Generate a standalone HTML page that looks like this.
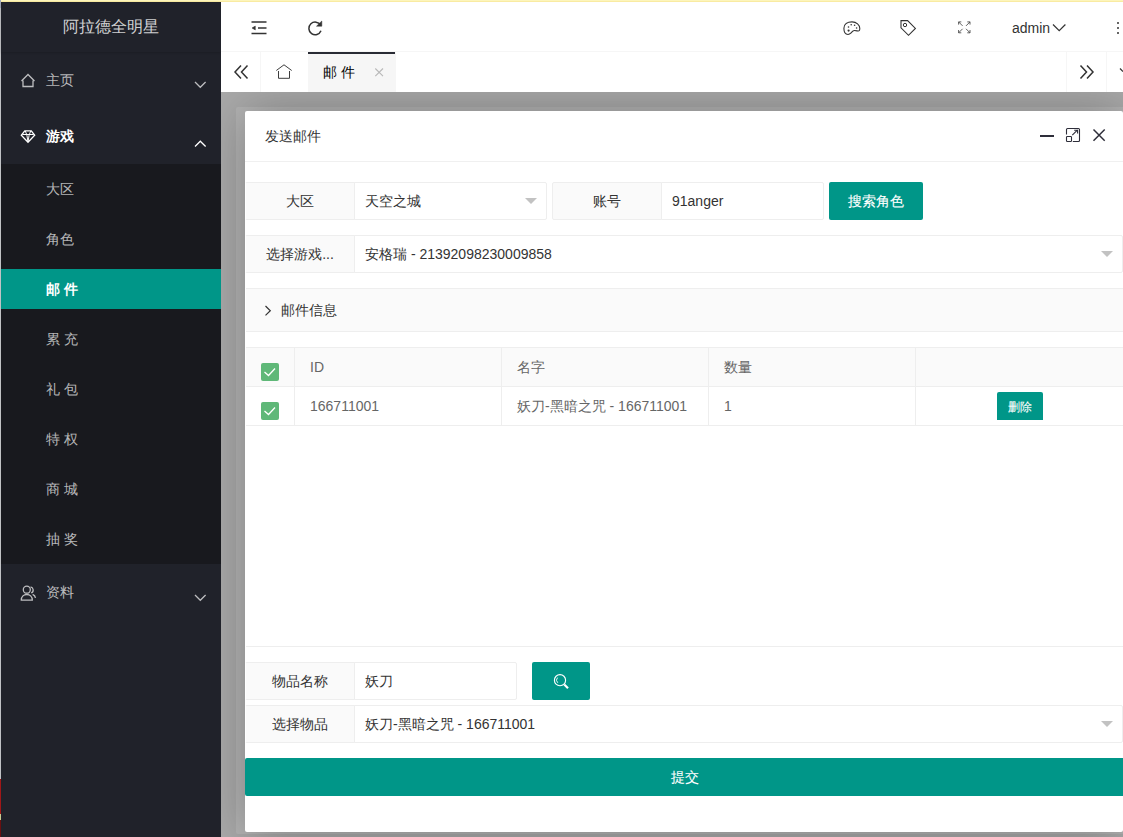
<!DOCTYPE html>
<html><head><meta charset="utf-8">
<style>
*{margin:0;padding:0;box-sizing:border-box}
html,body{width:1123px;height:837px;overflow:hidden}
body{position:relative;background:#c0c2c5;font-family:"Liberation Sans",sans-serif;font-size:14px;color:#333}
.a{position:absolute}
.topline{left:0;top:0;width:1123px;height:2px;background:#f9eba2}
.topline:before{content:"";position:absolute;left:0;top:0;width:1123px;height:1px;background:#fdf5bb}
.side{left:1px;top:2px;width:220px;height:835px;background:#20222a}
.logo{left:0;top:0;width:220px;height:50px;line-height:50px;text-align:center;color:rgba(255,255,255,.8);font-size:16px;box-shadow:0 1px 2px 0 rgba(0,0,0,.15)}
.nav{left:0;width:220px;height:56px;line-height:56px;color:rgba(255,255,255,.7);padding-left:45px}
.child{left:0;top:162px;width:220px;height:400px;background:#18191e}
.ci{left:0;width:220px;height:40px;line-height:40px;padding-left:45px;color:rgba(255,255,255,.7)}
.ci.on{background:#009688;color:#fff;font-weight:700}
.hdr{left:221px;top:2px;width:902px;height:50px;background:#fff;border-bottom:1px solid #f6f6f6}
.tabs{left:221px;top:52px;width:902px;height:40px;background:#fff}
.body{left:221px;top:92px;width:902px;height:745px;background:#a9a9a9;overflow:hidden}
.card{left:15px;top:15px;width:1000px;height:727px;background:#b3b3b3;border-radius:2px}
.layer{left:24px;top:19px;width:878px;height:721px;background:#fff;border-radius:2px;box-shadow:1px 1px 50px rgba(0,0,0,.3)}
.ltitle{left:0;top:0;width:100%;height:51px;border-bottom:1px solid #f0f0f0;padding-left:20px;line-height:50px;color:#333}
.lbl{background:#fafafa;border:1px solid #eee;border-radius:2px 0 0 2px;text-align:center;height:38px;line-height:36px;width:110px;color:#333}
.inp{background:#fff;border:1px solid #eee;border-radius:0 2px 2px 0;height:38px;line-height:36px;padding-left:10px;color:#333;white-space:nowrap}
.btn{background:#009688;color:#fff;border-radius:2px;text-align:center;-webkit-text-stroke:.1px #fff}
.tri{width:0;height:0;border-left:6px solid transparent;border-right:6px solid transparent;border-top:6px solid #c2c2c2}
.hl{height:1px;background:#eee}
.vl{width:1px;background:#eee}
.th{color:#666;line-height:38px}
.cb{width:18px;height:18px;background:#5fb878;border-radius:2px}
svg.ov{position:absolute;left:0;top:0;width:1123px;height:837px}
</style></head><body>
<div class="a topline"></div>
<div class="a" style="left:0;top:0;width:1px;height:8px;background:#a2a9b8"></div>
<div class="a" style="left:0;top:779px;width:1px;height:35px;background:#a01818"></div>
<div class="a" style="left:0;top:814px;width:1px;height:6px;background:#c8c890"></div>
<div class="a" style="left:0;top:820px;width:1px;height:17px;background:#6a1010"></div>

<!-- SIDEBAR -->
<div class="a side">
  <div class="a logo">阿拉德全明星</div>
  <div class="a nav" style="top:50px">主页</div>
  <div class="a nav" style="top:106px;color:#fff;font-weight:700">游戏</div>
  <div class="a child">
    <div class="a ci" style="top:5px">大区</div>
    <div class="a ci" style="top:55px">角色</div>
    <div class="a ci on" style="top:105px">邮 件</div>
    <div class="a ci" style="top:155px">累 充</div>
    <div class="a ci" style="top:205px">礼 包</div>
    <div class="a ci" style="top:255px">特 权</div>
    <div class="a ci" style="top:305px">商 城</div>
    <div class="a ci" style="top:355px">抽 奖</div>
  </div>
  <div class="a nav" style="top:562px">资料</div>
</div>

<!-- HEADER -->
<div class="a hdr">
  <div class="a" style="left:791px;top:1px;line-height:50px;color:#333">admin</div>
</div>
<div class="a tabs">
  <div class="a vl" style="left:39px;top:0;height:40px;background:#f6f6f6"></div>
  <div class="a" style="left:87px;top:0;width:88px;height:40px;background:#f6f6f6"></div>
  <div class="a" style="left:87px;top:0;width:87px;height:2px;background:#292b34"></div>
  <div class="a" style="left:102px;top:0;line-height:40px;color:#000;font-weight:500">邮 件</div>
  <div class="a vl" style="left:845px;top:0;height:40px;background:#f6f6f6"></div>
  <div class="a vl" style="left:885px;top:0;height:40px;background:#f6f6f6"></div>
</div>

<!-- BODY with shade -->
<div class="a body"><div class="a card"></div>
<div class="a layer">
  <div class="a ltitle">发送邮件</div>
  <!-- row1 -->
  <div class="a lbl" style="left:0;top:71px;border-left-color:#fff">大区</div>
  <div class="a inp" style="left:109px;top:71px;width:193px">天空之城</div>
  <div class="a tri" style="left:280px;top:87px"></div>
  <div class="a lbl" style="left:307px;top:71px">账号</div>
  <div class="a inp" style="left:416px;top:71px;width:163px">91anger</div>
  <div class="a btn" style="left:584px;top:71px;width:94px;height:38px;line-height:38px">搜索角色</div>
  <!-- row2 -->
  <div class="a lbl" style="left:0;top:124px;border-left-color:#fff">选择游戏...</div>
  <div class="a inp" style="left:109px;top:124px;width:769px">安格瑞 - 21392098230009858</div>
  <div class="a tri" style="left:856px;top:140px"></div>
  <!-- collapse -->
  <div class="a" style="left:1px;top:177px;width:958px;height:44px;background:#fafafa;border-top:1px solid #eee;border-bottom:1px solid #eee"></div>
  <div class="a" style="left:36px;top:178px;line-height:42px;color:#333">邮件信息</div>
  <!-- table -->
  <div class="a hl" style="left:1px;top:236px;width:958px"></div>
  <div class="a" style="left:1px;top:237px;width:958px;height:38px;background:#fafafa"></div>
  <div class="a hl" style="left:1px;top:275px;width:958px"></div>
  <div class="a hl" style="left:1px;top:314px;width:958px"></div>
  <div class="a vl" style="left:49px;top:237px;height:77px"></div>
  <div class="a vl" style="left:256px;top:237px;height:77px"></div>
  <div class="a vl" style="left:463px;top:237px;height:77px"></div>
  <div class="a vl" style="left:670px;top:237px;height:77px"></div>
  <div class="a cb" style="left:16px;top:252px"></div>
  <div class="a cb" style="left:16px;top:291px"></div>
  <div class="a th" style="left:65px;top:237px">ID</div>
  <div class="a th" style="left:272px;top:237px">名字</div>
  <div class="a th" style="left:479px;top:237px">数量</div>
  <div class="a th" style="left:65px;top:276px">166711001</div>
  <div class="a th" style="left:272px;top:276px">妖刀-黑暗之咒 - 166711001</div>
  <div class="a th" style="left:479px;top:276px">1</div>
  <div class="a" style="left:752px;top:281px;width:46px;height:28px;overflow:hidden">
    <div class="btn" style="width:46px;height:32px;line-height:30px;font-size:12px">删除</div>
  </div>
  <div class="a hl" style="left:1px;top:535px;width:958px"></div>
  <!-- bottom form -->
  <div class="a lbl" style="left:0;top:551px;border-left-color:#fff">物品名称</div>
  <div class="a inp" style="left:109px;top:551px;width:163px">妖刀</div>
  <div class="a btn" style="left:287px;top:551px;width:58px;height:38px"></div>
  <div class="a lbl" style="left:0;top:594px;border-left-color:#fff">选择物品</div>
  <div class="a inp" style="left:109px;top:594px;width:769px">妖刀-黑暗之咒 - 166711001</div>
  <div class="a tri" style="left:856px;top:610px"></div>
  <div class="a btn" style="left:0;top:647px;width:960px;height:38px;line-height:38px;padding-right:80px">提交</div>
</div>
</div>

<svg class="ov" viewBox="0 0 1123 837" fill="none">
  <!-- sidebar icons -->
  <g stroke="rgba(255,255,255,.7)" stroke-width="1.3">
    <path d="M21.5 81L28 74.5L34.5 81M23 80.5V86.5H33V80.5"/>
    <path d="M195 82l5.3 5.3l5.3-5.3"/>
    <circle cx="26.8" cy="589.7" r="3.5"/>
    <path d="M21.3 600.2c0-3.5 2.5-5.7 5.5-5.7s5.5 2.2 5.5 5.7z"/>
    <path d="M30.6 586.9a3.2 3.2 0 0 1 .6 6.1M32.6 594.4c1.5.6 2.6 1.8 2.9 3.5"/>
    <path d="M195 595l5.3 5.3l5.3-5.3"/>
  </g>
  <g stroke="#fff" stroke-width="1.3">
    <path d="M24.8 130.8H31.3L34.7 135.3L28 142.3L21.3 135.3Z"/>
    <path d="M22.5 134.5H33.5M25.3 131l1.6 4.2L28 142M30.7 131l-1.6 4.2L28 142" stroke-width="1"/>
    <path d="M195 146.5l5.3-5.3l5.3 5.3"/>
  </g>
  <!-- header icons -->
  <g stroke="#333" stroke-width="1.3">
    <path d="M251.5 22H266.5M258 28H266.5M251.5 33.5H266.5" stroke-width="1.6"/>
    <path d="M255.3 26.1V29.9L252 28Z" fill="#333" stroke-width=".5"/>
    <path d="M320.6 25.2A6.3 6.3 0 1 0 321 30.8" stroke-width="1.5"/>
    <path d="M316.5 26.2H321.8V21Z" fill="#333" stroke-width=".5"/>
    <path d="M852 21.9c4.5 0 7.8 3 7.8 6.6c0 2.4-.9 2.7-2 2.5c-1-.2-1.8-.5-3.4-.5c-1.8 0-2.6 1.7-3.6 2.7c-.9.9-1.8 1.3-2.8 1.3c-2.9 0-4.1-2.7-4.1-6.2c0-4.1 3.5-6.4 8.1-6.4z" stroke-width="1.1"/>
    <circle cx="851.2" cy="24.8" r=".8" fill="#333" stroke="none"/>
    <circle cx="854.6" cy="25.3" r=".8" fill="#333" stroke="none"/>
    <circle cx="848.5" cy="27" r=".8" fill="#333" stroke="none"/>
    <circle cx="856.6" cy="28" r=".8" fill="#333" stroke="none"/>
    <circle cx="848.6" cy="30.6" r="1.1" fill="#333" stroke="none"/>
    <path d="M901 20.6H907.6L915.4 28.4L908.5 35.3L901 27.8Z" stroke-width="1.1"/>
    <circle cx="905" cy="25" r="1.7" stroke-width="1"/>
    <g stroke-width=".85" stroke="#444">
      <path d="M958.6 24.6V21.9H961.3M958.6 21.9L962.6 25.9"/>
      <path d="M970 24.6V21.9H967.3M970 21.9L966 25.9"/>
      <path d="M958.6 30V32.8H961.3M958.6 32.8L962.6 28.8"/>
      <path d="M970 30V32.8H967.3M970 32.8L966 28.8"/>
    </g>
    <path d="M1053 24.5L1059.2 30.7L1065.4 24.5" stroke-width="1.2"/>
    <circle cx="1118" cy="23" r="1" fill="#333" stroke="none"/>
    <circle cx="1118" cy="28" r="1" fill="#333" stroke="none"/>
    <circle cx="1118" cy="33" r="1" fill="#333" stroke="none"/>
  </g>
  <!-- tab icons -->
  <g stroke="#333" stroke-width="1.3">
    <path d="M241 65.5L235 72L241 78.5M247.5 65.5L241.5 72L247.5 78.5" stroke-width="1.5"/>
    <path d="M276.3 70.5L284 64.8L291.7 70.5M278.5 71V78.3H289.5V71" stroke-width=".95"/>
    <path d="M1080.5 65.5L1086.5 72L1080.5 78.5M1087 65.5L1093 72L1087 78.5" stroke-width="1.5"/>
    <path d="M1120 68.5L1123 71.5" stroke-width="1.2"/>
  </g>
  <path d="M375.3 68.5L383 76.2M383 68.5L375.3 76.2" stroke="#b8b8b8" stroke-width="1.1"/>
  <!-- layer icons -->
  <g stroke="#2e2e3a">
    <path d="M1040 136H1054" stroke-width="2"/>
    <path d="M1066.5 134.5V129.5Q1066.5 128.5 1067.5 128.5H1078.5Q1079.5 128.5 1079.5 129.5V140.5Q1079.5 141.5 1078.5 141.5H1072.8" stroke-width="1.1"/>
    <rect x="1066.5" y="136.5" width="5" height="5" rx=".8" stroke-width="1.1"/>
    <path d="M1072.3 135.2L1077.6 129.9M1074.2 130.2H1077.6V133.6" stroke-width="1.1"/>
    <path d="M1093.5 129.5L1104.7 140.7M1104.7 129.5L1093.5 140.7" stroke-width="1.5"/>
  </g>
  <!-- collapse arrow -->
  <path d="M265.5 306L270.3 310.7L265.5 315.4" stroke="#333" stroke-width="1.2"/>
  <!-- checkmarks -->
  <path d="M264.5 372L268.5 375.5L275 368.5M264.5 411L268.5 414.5L275 407.5" stroke="#fff" stroke-width="1.3"/>
  <!-- search icon -->
  <g stroke="#fff">
    <circle cx="560" cy="680.2" r="5.6" stroke-width="1.1"/>
    <path d="M557.6 677.6A3.6 3.6 0 0 0 557.8 682.8" stroke-width=".9"/>
    <path d="M564.3 684.5L568 688.2" stroke-width="2.2"/>
  </g>
</svg>
</body></html>
